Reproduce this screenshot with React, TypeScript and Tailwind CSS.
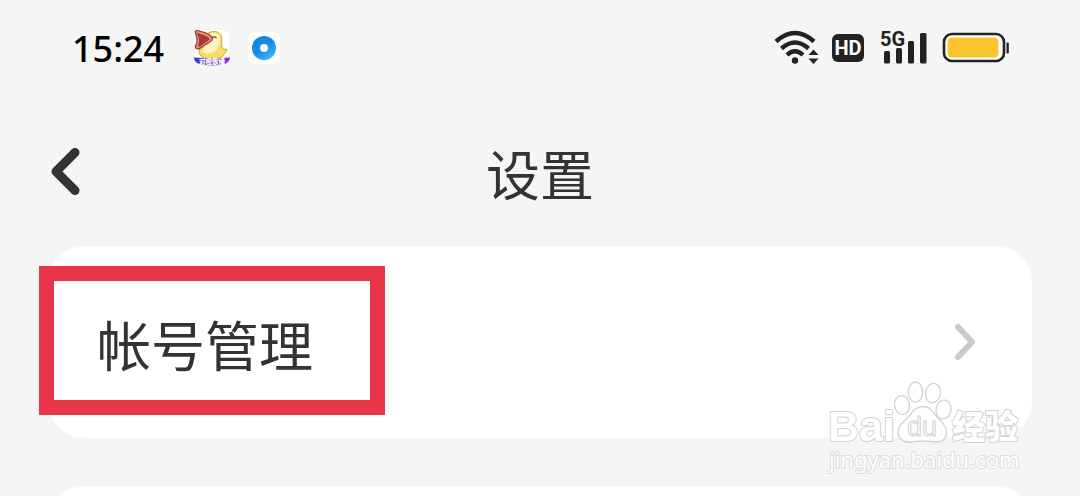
import React from "react";

function DuckIcon() {
  return (
    <svg viewBox="0 0 40 40" className="size-10" aria-hidden="true">
      <rect x="3" y="2" width="34" height="34" rx="7" fill="#fff" />
      <path
        d="M14 7c4-5 14-5 15.500 1.500.8 4-.5 7 .5 10.500 1 2.500 3 3 5 2-.5 2.500-1.500 4-3.500 5.500 0 3-5 4-12 4-7.500 0-12.500-2-12.500-7 0-4 4-8 7-16.500z"
        fill="#f9dc68"
        stroke="#d6a437"
        strokeWidth="1"
      />
      <path d="M15 7.500c3-3.500 10.500-3.500 12.500.5 1.500 5-.5 12-5 15.500-4 2.500-9 2.500-12 0z" fill="#fff4c2" />
      <path d="M20 9.500q2.500-1.500 4.500 .5" fill="none" stroke="#6b4420" strokeWidth="1.300" />
      <path
        d="M3.500 5C2.500 3 4 2 6.500 2.800 10 4 13 4 16 6c2.500 1.500 5 3 4.500 5-.5 2.500-4 4-7 5.500-3 1.600-4.500 4.500-8 4.500-2.500 0-2.500-2.500-1-5.500 1.500-4 0-7-1-10.500z"
        fill="#dd9a74"
        stroke="#8d3d2b"
        strokeWidth="1.200"
      />
      <path d="M5 4.500C8.500 6.500 12 6.500 15 8.500c2 1.200 3 1.500 2.500 3-1 2-5 3-7.500 5.500-2 2-4 2.500-4 .5C8.500 12.500 6 8.500 5 4.500z" fill="#ad3637" />
      <path d="M2 29.500q18 1 36 0c0 3-2 4.500-4 6q-13 4-28 0c-2.500-1.500-4-3-4-6z" fill="url(#ribbon)" />
      <text x="20" y="35.500" textAnchor="middle" fill="#fff" fontSize="6.500" fontWeight="900" fontFamily="Noto Sans CJK SC, sans-serif">
        对橙歌播
      </text>
      <defs>
        <linearGradient id="ribbon">
          <stop offset="0" stopColor="#3542bd" />
          <stop offset="1" stopColor="#8b2ed5" />
        </linearGradient>
      </defs>
    </svg>
  );
}

function RingIcon() {
  return (
    <svg viewBox="0 0 34 34" className="size-[34px]" aria-hidden="true">
      <defs>
        <linearGradient id="ring" x1="0" y1="0" x2="0.700" y2="1">
          <stop offset="0" stopColor="#1585dc" />
          <stop offset="0.550" stopColor="#168ae2" />
          <stop offset="1" stopColor="#43b2f5" />
        </linearGradient>
      </defs>
      <rect x="1" y="1" width="32" height="32" rx="7" fill="#fff" />
      <circle cx="17" cy="17" r="12" fill="url(#ring)" />
      <circle cx="17" cy="17" r="4" fill="#fff" />
    </svg>
  );
}

function WifiIcon() {
  return (
    <svg viewBox="0 0 46 36" className="h-9 w-[46px]" aria-label="Wi-Fi" role="img">
      <g fill="none" stroke="#222" strokeWidth="4.400">
        <path d="M2 11.500Q21 -5.500 40 11.500" />
        <path d="M7.500 18.500Q21 6.500 34.500 18.500" />
        <path d="M13 25Q21 17.500 29 25" />
      </g>
      <circle cx="21" cy="30.500" r="3.200" fill="#222" />
      <path d="M39.500 19.500l5 5.500h-10zM39.500 34l5-5.500h-10z" fill="#222" />
    </svg>
  );
}

function SignalIcon() {
  return (
    <svg viewBox="0 0 48 36" className="h-9 w-12" aria-hidden="true">
      <g fill="#222">
        <rect x="4" y="21" width="6" height="12.500" rx="1.500" />
        <rect x="16" y="18" width="6" height="15.500" rx="1.500" />
        <rect x="28" y="11" width="6" height="22.500" rx="1.500" />
        <rect x="40" y="3" width="6.500" height="30.500" rx="1.500" />
      </g>
      <text x="0" y="16" fill="#222" fontSize="20" fontWeight="700" fontFamily="Roboto, sans-serif">
        5G
      </text>
    </svg>
  );
}

function BatteryIcon() {
  return (
    <svg viewBox="0 0 68 32" className="h-8 w-[68px]" aria-label="Battery" role="img">
      <rect x="2" y="2" width="60" height="27" rx="8" fill="#fff" stroke="#222" strokeWidth="2.600" />
      <rect x="5.500" y="5.500" width="51" height="20" rx="4.500" fill="#fac42f" />
      <rect x="64.500" y="10.500" width="2.300" height="11" rx="1" fill="#222" />
    </svg>
  );
}

function StatusBar() {
  return (
    <div className="flex h-24 shrink-0 items-center justify-between pr-[70px] pl-[72px]">
      <div className="flex items-center">
        <span className="w-[120px] pt-0.5 text-[36px] leading-none font-medium text-black">15:24</span>
        <DuckIcon />
        <div className="ml-[15px]">
          <RingIcon />
        </div>
      </div>
      <div className="flex items-center">
        <WifiIcon />
        <span className="ml-3 flex h-7 w-8 items-center justify-center rounded-md bg-[#222] font-[Roboto,sans-serif] text-[20px] leading-none font-bold text-white">
          HD
        </span>
        <div className="ml-4">
          <SignalIcon />
        </div>
        <div className="ml-3.5">
          <BatteryIcon />
        </div>
      </div>
    </div>
  );
}

function Watermark() {
  return (
    <svg
      viewBox="0 0 210 115"
      className="pointer-events-none absolute right-[2px] bottom-[-48px] h-[115px] w-[210px]"
      aria-hidden="true"
    >
      <g fill="#fff" stroke="#d2d2d2" strokeWidth="2" strokeLinejoin="round" className="[paint-order:stroke]">
        <text x="8" y="70" fontSize="43" fontWeight="700" fontFamily="Liberation Sans, sans-serif">
          Bai
        </text>
        <text x="132" y="68" fontSize="33" fontWeight="900" fontFamily="Noto Sans CJK SC, sans-serif">
          经验
        </text>
        <text x="9" y="97" fontSize="22" stroke="#dcdcdc" fontFamily="Noto Sans, sans-serif">
          jingyan.baidu.com
        </text>
      </g>
      <g fill="#fff" stroke="#d2d2d2" strokeWidth="1.300">
        <ellipse cx="82" cy="34" rx="7.500" ry="9.500" transform="rotate(-8 82 34)" />
        <ellipse cx="95.500" cy="21" rx="7.300" ry="10" />
        <ellipse cx="113" cy="22" rx="7.500" ry="9.700" transform="rotate(10 113 22)" />
        <ellipse cx="123.500" cy="38.500" rx="7.500" ry="9.500" transform="rotate(10 123.500 38.500)" />
        <path d="M103 35.500c8 0 10 6 14 10.500 5 5.500 9.500 9 9.500 15.500 0 6-4 9.500-9.500 9.500-5 0-9-1-14.500-1s-9 1-13.500 1c-6.500 0-11-4-11-10 0-6.500 5-9.500 9.500-14 4.500-5 7-11.500 15.500-11.500z" />
        <text x="87" y="65" fontSize="27" strokeWidth="1" fontFamily="Liberation Sans, sans-serif">
          du
        </text>
      </g>
    </svg>
  );
}

export default function App() {
  return (
    <div className="flex h-screen flex-col overflow-hidden bg-[#f5f5f5] font-['Noto_Sans','Noto_Sans_CJK_SC',sans-serif] text-[#333]">
      <StatusBar />
      <header className="grid h-[150px] shrink-0 grid-cols-[1fr_auto_1fr] items-center px-12">
        <button type="button" aria-label="返回" className="w-9">
          <svg viewBox="0 0 36 52" className="h-[52px] w-9" aria-hidden="true">
            <path d="M27 7.500L8 26.500L27 45.500" fill="none" stroke="#333" strokeWidth="9" strokeLinecap="round" strokeLinejoin="round" />
          </svg>
        </button>
        <h1 className="pt-2 text-[54px] leading-none">设置</h1>
      </header>
      <main className="flex flex-col gap-12 px-12">
        <section className="relative rounded-[36px] bg-white">
          <a href="#account" className="flex h-48 items-center justify-between pr-[53px] pl-[49px]">
            <span className="pt-2 text-[54px] leading-none">帐号管理</span>
            <svg viewBox="0 0 28 42" className="h-[42px] w-7" aria-hidden="true">
              <path d="M7 6L21 21L7 36" fill="none" stroke="#c9c9c9" strokeWidth="6" strokeLinecap="round" strokeLinejoin="round" />
            </svg>
          </a>
          <div className="pointer-events-none absolute top-5 -left-[9px] h-[149px] w-[346px] border-[15px] border-[#e93549]" />
          <Watermark />
        </section>
        <section className="h-48 rounded-[36px] bg-white" />
      </main>
    </div>
  );
}
